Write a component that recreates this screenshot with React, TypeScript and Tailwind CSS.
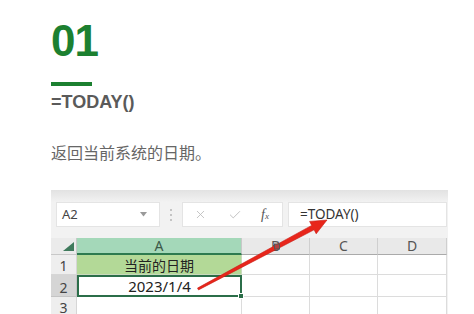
import React from "react";
import { X, Check } from "lucide-react";

const cjk = { fontFamily: '"Noto Sans CJK SC", "Noto Sans", sans-serif' };
const ui = { fontFamily: '"Noto Sans", "Noto Sans CJK SC", sans-serif' };

const cols = [
  { key: "A", w: "w-[165px]" },
  { key: "B", w: "w-[68px]" },
  { key: "C", w: "w-[68px]" },
  { key: "D", w: "w-[69px]" },
];

function Toolbar() {
  return (
    <div className="flex h-[25px] items-stretch">
      {/* Name box */}
      <div className="ml-[5px] flex w-[104px] items-center justify-between border border-[#e4e4e4] bg-white pl-[5px] pr-[12px]">
        <span className="text-[13px] text-[#444]" style={ui}>
          A2
        </span>
        <svg width="7" height="5" viewBox="0 0 7 5">
          <path d="M0 0 L7 0 L3.5 4.5 Z" fill="#9a9a9a" />
        </svg>
      </div>
      {/* Separator */}
      <div className="flex w-[22px] flex-col items-center justify-center gap-[3px]">
        <div className="h-[2px] w-[2px] bg-[#c4c4c4]" />
        <div className="h-[2px] w-[2px] bg-[#c4c4c4]" />
        <div className="h-[2px] w-[2px] bg-[#c4c4c4]" />
      </div>
      {/* Function buttons */}
      <div className="flex w-[101px] items-center border border-[#e4e4e4] bg-white">
        <X className="ml-[11px] h-[13px] w-[13px] text-[#bdbdbd]" strokeWidth={1.6} />
        <Check className="ml-[21px] h-[14px] w-[14px] text-[#bdbdbd]" strokeWidth={1.6} />
        <span
          className="ml-[19px] text-[14px] italic text-[#555]"
          style={{ fontFamily: '"Liberation Serif", serif' }}
        >
          f<span className="text-[9px]">x</span>
        </span>
      </div>
      {/* Formula box */}
      <div className="ml-[5px] flex w-[159px] items-center border border-[#e4e4e4] bg-white pl-[11px]">
        <span className="text-[13.5px] text-[#333]" style={ui}>
          =TODAY()
        </span>
      </div>
    </div>
  );
}

function Grid() {
  return (
    <div className="flex flex-col" style={ui}>
      {/* Column headers */}
      <div className="flex h-[17px]">
        <div className="relative w-[26px] border-b border-r border-[#c8c8c8] bg-[#ebebeb]">
          <svg className="absolute bottom-[3px] right-[2px]" width="11" height="9" viewBox="0 0 11 9">
            <path d="M11 0 L11 9 L0 9 Z" fill="#3f7a5c" />
          </svg>
        </div>
        {cols.map((c) =>
          c.key === "A" ? (
            <div
              key={c.key}
              className={`${c.w} flex items-center justify-center border-b-2 border-r border-b-[#2d7a4f] border-r-[#c8c8c8] bg-[#a4d8b9] text-[14px] leading-none text-[#3c5a48]`}
            >
              A
            </div>
          ) : (
            <div
              key={c.key}
              className={`${c.w} flex items-center justify-center border-b border-r border-b-[#aaaaaa] border-r-[#cfcfcf] bg-[#e9e9e9] text-[14px] leading-none text-[#555]`}
            >
              {c.key}
            </div>
          )
        )}
      </div>

      {/* Row 1 */}
      <div className="flex h-[20px]">
        <div className="flex w-[26px] items-end justify-center border-b border-r border-[#d6d6d6] bg-[#eeeeee] pb-[1px] text-[14px] leading-none text-[#444]">
          1
        </div>
        <div
          className="flex w-[165px] items-center justify-center border-b border-r border-[#c9d9bd] bg-[#b3d997] text-[14px] leading-none text-[#222]"
          style={cjk}
        >
          当前的日期
        </div>
        <div className="w-[68px] border-b border-r border-[#dcdcdc] bg-white" />
        <div className="w-[68px] border-b border-r border-[#dcdcdc] bg-white" />
        <div className="w-[69px] border-b border-r border-[#dcdcdc] bg-white" />
      </div>

      {/* Row 2 */}
      <div className="flex h-[22px]">
        <div className="flex w-[26px] items-end justify-center border-b border-r border-[#c4c4c4] bg-[#d5d5d5] pb-[1px] text-[14px] leading-none text-[#444]">
          2
        </div>
        <div className="relative flex w-[165px] items-center justify-center border-2 border-[#2b6e49] bg-white text-[15px] leading-none text-[#222]">
          2023/1/4
          <div className="absolute bottom-[-4px] right-[-4px] h-[6px] w-[6px] border border-white bg-[#2b6e49]" />
        </div>
        <div className="w-[68px] border-b border-r border-[#dcdcdc] bg-white" />
        <div className="w-[68px] border-b border-r border-[#dcdcdc] bg-white" />
        <div className="w-[69px] border-b border-r border-[#dcdcdc] bg-white" />
      </div>

      {/* Row 3 */}
      <div className="flex h-[22px]">
        <div className="flex w-[26px] items-start justify-center border-r border-[#d6d6d6] bg-[#eeeeee] pt-[4px] text-[14px] leading-none text-[#444]">
          3
        </div>
        <div className="w-[165px] border-r border-[#dcdcdc] bg-white" />
        <div className="w-[68px] border-r border-[#dcdcdc] bg-white" />
        <div className="w-[68px] border-r border-[#dcdcdc] bg-white" />
        <div className="w-[69px] border-r border-[#dcdcdc] bg-white" />
      </div>
    </div>
  );
}

function RedArrow() {
  return (
    <svg className="pointer-events-none absolute left-0 top-0" width="474" height="314" viewBox="0 0 474 314">
      <polygon
        points="197.5,288.1 311.7,225.4 309.6,221.4 327,220 316.2,233.8 314.1,229.8 198.5,289.9"
        fill="#e8261b"
        stroke="#c81a12"
        strokeWidth="0.6"
        strokeLinejoin="round"
      />
      <rect x="274.5" y="244" width="5" height="5" fill="#b04040" stroke="#555" strokeWidth="1" />
    </svg>
  );
}

export default function App() {
  return (
    <div className="relative h-[314px] w-[474px] overflow-hidden bg-white">
      <div className="pl-[51px] pt-[19px]">
        <div
          className="text-[44px] font-bold leading-none tracking-[-1px] text-[#1c8030]"
          style={{ fontFamily: '"Liberation Sans", Arial, sans-serif' }}
        >
          01
        </div>
        <div className="mt-[19px] h-[4px] w-[41px] bg-[#1c8030]" />
        <div
          className="mt-[7px] text-[18px] font-bold leading-none text-[#5a5a5a]"
          style={{ fontFamily: '"Liberation Sans", Arial, sans-serif' }}
        >
          =TODAY()
        </div>
        <div className="mt-[33px] text-[16px] leading-none text-[#666]" style={cjk}>
          返回当前系统的日期。
        </div>
      </div>

      <div className="ml-[51px] mt-[30px] w-[397px] bg-[#f2f2f2]">
        <div className="h-[12px] bg-gradient-to-b from-[#e2e2e2] to-[#f2f2f2]" />
        <Toolbar />
        <div className="h-[11px]" />
        <Grid />
      </div>

      <RedArrow />
    </div>
  );
}
